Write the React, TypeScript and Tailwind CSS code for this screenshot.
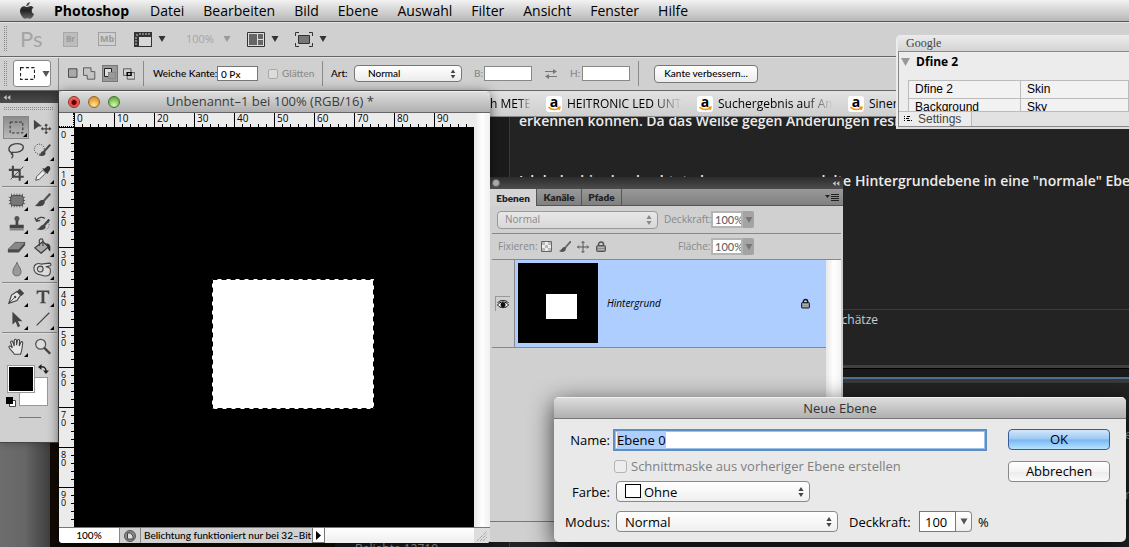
import React, { useEffect, useRef } from "react";

const ui = "font-['Open_Sans','Noto_Sans',sans-serif]";
const small = "font-[Lato,sans-serif] font-medium";

function Steppers({ className }: { className: string }) {
  return (
    <svg viewBox="0 0 6 10" className={`pointer-events-none absolute h-[10px] w-[6px] ${className}`}>
      <path d="M3 0L5.6 4H.4zM3 10L.4 6h5.2z" fill="currentColor" />
    </svg>
  );
}

function Down({ className = "text-[#333]" }: { className?: string }) {
  return (
    <svg viewBox="0 0 8 6" className={`h-[6px] w-[8px] ${className}`}>
      <path d="M.5 0h7L4 6z" fill="currentColor" />
    </svg>
  );
}

function Grip() {
  return (
    <div className="flex h-[26px] w-[4px] shrink-0 gap-px">
      <span className="w-px bg-[repeating-linear-gradient(#888_0_1px,transparent_1px_2px)]" />
      <span className="w-px bg-[repeating-linear-gradient(#888_0_1px,transparent_1px_2px)]" />
    </div>
  );
}

function Collapse({ className = "" }: { className?: string }) {
  return (
    <svg viewBox="0 0 8 6" className={`h-[5px] w-[8px] ${className}`}>
      <path d="M3.6 0v6L0 3zM8 0v6L4.4 3z" fill="#c4c4c4" />
    </svg>
  );
}

function MenuBar() {
  const items = ["Datei", "Bearbeiten", "Bild", "Ebene", "Auswahl", "Filter", "Ansicht", "Fenster", "Hilfe"];
  return (
    <nav className="flex h-[22px] shrink-0 items-center gap-[19px] border-b border-[#555] bg-gradient-to-b from-[#f2f2f2] to-[#b8b8b8] pl-[19px] text-[14px] leading-[20px] text-black">
      <svg viewBox="0 0 16 18" className="h-[17px] w-[16px]" aria-label="Apple">
        <defs>
          <linearGradient id="apple" x1="0" y1="0" x2="0" y2="1">
            <stop offset="0" stopColor="#555" />
            <stop offset="0.5" stopColor="#222" />
            <stop offset="1" stopColor="#666" />
          </linearGradient>
        </defs>
        <path
          fill="url(#apple)"
          d="M10.9 0c.1 1.3-.4 2.300-1.100 3.100C9.100 3.900 8.200 4.300 7.300 4.200c-.1-1.200.5-2.200 1.200-2.900C9.200.6 10.200.1 10.900 0zM14.900 6.100c-1.200.8-1.900 1.800-1.900 3.200 0 1.600.9 2.800 2.400 3.400-.5 1.400-1.200 2.700-2.100 3.800-.6.7-1.200 1.200-2.100 1.200-1 0-1.400-.6-2.700-.6s-1.700.6-2.700.6c-.9 0-1.600-.6-2.200-1.300C1.700 14.400.6 12 .6 9.600c0-3.400 2.200-5.200 4.300-5.200 1.300 0 2.200.8 3.300.8 1.100 0 2-.9 3.600-.9 1.200 0 2.400.6 3.100 1.800z"
        />
      </svg>
      <b className="w-[77px] font-bold">Photoshop</b>
      {items.map((t) => (
        <span key={t}>{t}</span>
      ))}
    </nav>
  );
}

function AppBar() {
  return (
    <div className="flex h-[35px] shrink-0 items-center border-b border-[#666] bg-[#d0d0d0] pl-[4px] shadow-[inset_0_1px_0_#e4e4e4]">
      <Grip />
      <span className="ml-[12px] w-[26px] font-[Lato,sans-serif] text-[22px] leading-[24px] text-[#a4a4a4]">Ps</span>
      <span className="ml-[17px] flex h-[15px] w-[15px] items-center justify-center border border-[#a8a8a8] bg-[#bdbdbd] text-[8px] font-bold text-[#999]">
        Br
      </span>
      <span className="ml-[20px] flex h-[14px] w-[18px] items-center justify-center border border-[#a0a0a0] text-[9px] font-bold text-[#999]">
        Mb
      </span>
      <svg viewBox="0 0 18 15" className="ml-[18px] h-[15px] w-[18px]">
        <path d="M0 0h18v15H0z" fill="#333" />
        <path d="M5 5h12v9H5z" fill="#d8d8d8" />
        <path d="M3 2v2M6 1v2M9 1v2M12 1v2M15 1v2M1 6h2M1 9h2M1 12h2" stroke="#ccc" />
      </svg>
      <span className="ml-[6px]"><Down /></span>
      <span className="ml-[20px] text-[11px] text-[#a4a4a4]">100%</span>
      <span className="ml-[9px]"><Down className="text-[#999]" /></span>
      <svg viewBox="0 0 18 15" className="ml-[16px] h-[15px] w-[18px]">
        <path d="M.5.5h17v14H.5z" fill="#ddd" stroke="#333" />
        <path d="M2 2h8v11H2zM11 2h5v5h-5zM11 8h5v5h-5z" fill="#666" />
      </svg>
      <span className="ml-[6px]"><Down /></span>
      <svg viewBox="0 0 18 15" className="ml-[16px] h-[15px] w-[18px]" fill="none" stroke="#333">
        <path d="M.5 4V.5H4M14 .5h3.500V4M17.500 11v3.500H14M4 14.500H.5V11" />
        <path d="M3.500 3.500h11v8h-11z" fill="#777" />
      </svg>
      <span className="ml-[6px]"><Down /></span>
    </div>
  );
}

function OptionsBar() {
  const sep = "h-[25px] w-px shrink-0 bg-[#8a8a8a]";
  return (
    <div className={`flex h-[34px] shrink-0 items-center border-b border-[#666] bg-[#d0d0d0] pl-[4px] text-[10px] shadow-[inset_0_1px_0_#e4e4e4] ${small}`}>
      <Grip />
      <button aria-label="Auswahlrechteck" className="ml-[5px] flex h-[27px] w-[38px] shrink-0 items-center rounded-[3px] border border-[#888] bg-white pl-[6px]">
        <svg viewBox="0 0 14 12" className="h-[13px] w-[15px]">
          <path d="M.5.5h13v11H.5z" fill="none" stroke="#222" strokeDasharray="3 2" />
        </svg>
        <span className="ml-[7px] flex"><Down className="w-[6px] text-[#555]" /></span>
      </button>
      <div className="mx-[7px] h-[32px] w-px shrink-0 bg-[#8a8a8a]" />
      <div className="flex w-[69px] items-center gap-[5px] pl-[2px]">
        <svg viewBox="0 0 11 11" className="h-[11px] w-[11px]">
          <path d="M.5.5h9v9h-9z" fill="#aaa" stroke="#444" />
        </svg>
        <svg viewBox="0 0 14 13" className="h-[13px] w-[14px]" fill="#c4c4c4" stroke="#555">
          <path d="M.5.5h8v4h4v8h-8v-4h-4z" />
        </svg>
        <span className="flex h-[17px] w-[17px] items-center justify-center border border-[#777] bg-[#9a9a9a]">
          <svg viewBox="0 0 12 11" className="h-[11px] w-[12px]" fill="none">
            <path d="M.5.5h7v4h-3v4h-4z" fill="#ddd" stroke="#222" />
            <path d="M4.500 4.500h7v6h-7z" stroke="#888" />
          </svg>
        </span>
        <svg viewBox="0 0 13 12" className="h-[12px] w-[13px]" fill="none" stroke="#555">
          <path d="M.5.5h8v7h-8zM4.500 4.500h8v7h-8z" />
          <path d="M4.500 4.500h4v3h-4z" fill="#eee" stroke="#000" strokeWidth="1.500" />
        </svg>
      </div>
      <div className={`ml-[8px] ${sep}`} />
      <label htmlFor="feather" className="ml-[9px] w-[64px] whitespace-nowrap">Weiche Kante:</label>
      <input id="feather" defaultValue="0 Px" className="h-[15px] w-[41px] border border-[#777] bg-white px-[3px] text-[10px] leading-[13px]" />
      <input id="alias" type="checkbox" disabled className="ml-[10px] h-[10px] w-[10px] appearance-none rounded-[2px] border border-[#aaa] bg-[#dcdcdc]" />
      <label htmlFor="alias" className="ml-[4px] w-[33px] text-[#8c8c8c]">Glätten</label>
      <div className={`ml-[7px] ${sep}`} />
      <label htmlFor="mode" className="ml-[8px] w-[23px]">Art:</label>
      <div className="relative">
        <select id="mode" className="block h-[17px] w-[108px] appearance-none rounded-[4px] border border-[#777] bg-gradient-to-b from-white to-[#ececec] pl-[13px] text-[10px] leading-[15px]">
          <option>Normal</option>
        </select>
        <Steppers className="top-[4px] right-[6px] scale-90 text-[#444]" />
      </div>
      <label htmlFor="w" className="ml-[12px] w-[8px] text-[#888]">B:</label>
      <input id="w" className="ml-[2px] h-[15px] w-[48px] border border-[#888] bg-white" />
      <svg viewBox="0 0 12 10" className="ml-[13px] h-[10px] w-[12px]" fill="#777" stroke="#777">
        <path d="M0 2.500h9M3 7.500h9" />
        <path d="M8 0l4 2.500-4 2.500zM4 5L0 7.500 4 10z" stroke="none" />
      </svg>
      <label htmlFor="h" className="ml-[13px] w-[10px] text-[#888]">H:</label>
      <input id="h" className="ml-[2px] h-[15px] w-[48px] border border-[#888] bg-white" />
      <div className={`ml-[8px] ${sep}`} />
      <button className="ml-[15px] h-[18px] w-[104px] rounded-[4px] border border-[#777] bg-gradient-to-b from-white to-[#ececec] leading-[15px] whitespace-nowrap">
        Kante verbessern...
      </button>
    </div>
  );
}

function Amazon() {
  return (
    <span className="relative flex h-[16px] w-[16px] shrink-0 justify-center rounded-[3px] bg-white">
      <b className="text-[14px] leading-[11px] text-black">a</b>
      <svg viewBox="0 0 14 5" className="absolute bottom-px h-[5px] w-[13px]" fill="none" stroke="#f39200" strokeWidth="1.500">
        <path d="M.5 1Q6 5.500 12 2M10 1h3l-1 3" />
      </svg>
    </span>
  );
}

function Bookmark({ text, width, fade = true }: { text: string; width: string; fade?: boolean }) {
  return (
    <span className={`flex items-center gap-[5px] ${width}`}>
      <Amazon />
      <span className={`overflow-hidden whitespace-nowrap ${fade ? "[mask-image:linear-gradient(90deg,#000_75%,transparent)]" : ""}`}>{text}</span>
    </span>
  );
}

function Browser() {
  return (
    <div className="absolute inset-0 flex flex-col overflow-hidden bg-[#232323]">
      <div className="flex h-[26px] shrink-0 items-center gap-[15px] border-b border-[#888] bg-gradient-to-b from-[#e2e2e2] to-[#cfcfcf] pl-[490px] text-[12px] text-black">
        <span className="w-[41px] overflow-hidden whitespace-nowrap [mask-image:linear-gradient(90deg,#000_70%,transparent)]">h METEO</span>
        <Bookmark text="HEITRONIC LED UNTER" width="w-[136px]" />
        <Bookmark text="Suchergebnis auf Amaz" width="w-[136px]" />
        <Bookmark text="Sinergy" width="w-[90px]" fade={false} />
      </div>
      <div className="flex grow">
        <div className="flex w-[510px] shrink-0 flex-col justify-end border-r border-[#3a3a3a] bg-[#1b1b1b]">
          <div className="flex h-[106px]">
            <div className="w-[50px] bg-gradient-to-r from-[#6d6d6d] via-[#666] to-[#3f3f3f]" />
            <div className="w-[285px] bg-[#120a04]" />
            <div className="flex grow items-end bg-[#1b1b1b] pl-[20px] text-[12px] text-[#aaa]">
              <span className="h-[4px] overflow-hidden leading-[12px]">Beliebte 12719</span>
            </div>
          </div>
        </div>
        <div className="flex min-w-0 grow flex-col overflow-hidden text-[14px] leading-[20px] font-semibold whitespace-nowrap text-[#ececec]">
          <p className="-mt-[6px] h-[60px] pl-[9px]">erkennen können. Da das Weiße gegen Änderungen resistent ist</p>
          <p className="flex h-[138px] pl-[9px]">
            <span className="flex w-[336px] shrink-0 justify-between pr-[4px]">
              <span>Ich habe hier beobachtet, dass</span>
              <span>umgewandelte</span>
            </span>
            <span>Hintergrundebene in eine "normale" Ebene</span>
          </p>
          <div className="flex h-[56px] items-start border-t border-[#3c3c3c] pl-[325px] text-[12px] font-normal text-[#ccc]">Schätze</div>
          <div className="h-[3px] bg-[#404040]" />
          <div className="h-[9px] border-t border-black bg-[#1a1a1a]" />
          <div className="h-[2px] bg-[#4c7194]" />
          <div className="h-[4px] bg-[#3a3a3a]" />
          <div className="flex flex-col items-end pt-[42px] text-[12px] font-normal text-[#aaa]">
            <span className="w-[4px]">e</span>
            <span className="mt-[40px] w-[4px]">r</span>
          </div>
        </div>
      </div>
    </div>
  );
}

type Tool = { name: string; art: React.ReactNode; active?: boolean; plain?: boolean };

const g1: Tool[] = [
  { name: "Auswahlrechteck", active: true, art: <path d="M3.500 4.500h14v12h-14z" fill="none" stroke="#222" strokeDasharray="3 2" /> },
  { name: "Verschieben", plain: true, art: (<><path d="M1 2l9 7-4 .5L1 13z" fill="#444" /><path d="M14.500 7v10M9.500 12h10M13 8.500L14.500 7 16 8.500M13 15.500l1.500 1.500 1.500-1.500M11 10.500L9.500 12l1.500 1.500M18 10.500l1.500 1.500-1.500 1.500" fill="none" stroke="#444" strokeWidth="1.200" /></>) },
  { name: "Lasso", art: <path d="M5 13C1 11 1 6 6 4s12-1 12 3-6 6-11 5.500c-3-.5-3 3-.5 2.500M5 13c2 2 2 4 0 6" fill="none" stroke="#444" strokeWidth="1.500" /> },
  { name: "Schnellauswahl", art: (<><circle cx="7" cy="9" r="5.500" fill="none" stroke="#222" strokeDasharray="1 1.500" /><path d="M19 4l-7 8" stroke="#444" strokeWidth="2.200" /><path d="M12 11c-4 0-3 4-6 5 4 1 8 1 8-3z" fill="#444" /></>) },
  { name: "Freistellen", art: (<><path d="M6.500 2v12h12M2 6.500h12v12" fill="none" stroke="#444" strokeWidth="2.300" /><path d="M4 17L18 3" stroke="#444" /></>) },
  { name: "Pipette", art: (<><path d="M3 18l1-4 7-7 3 3-7 7z" fill="#eee" stroke="#444" /><path d="M10 5l6 6 1-2 2-3c1-3-2-5-4-3l-2 2z" fill="#333" /></>) },
];
const g2: Tool[] = [
  { name: "Reparatur", art: (<><path d="M5 3v15M8 3v15M11 3v15M14 3v15M17 3v15M2 7h18M2 10.500h18M2 14h18" stroke="#555" /><rect x="4" y="5" width="14" height="11" rx="3" fill="#777" stroke="#444" /></>) },
  { name: "Pinsel", art: (<><path d="M19 3l-8 9" stroke="#555" strokeWidth="2.500" /><path d="M11 10c-5-1-5 5-9 6 5 2 11 1 11-4z" fill="#444" /></>) },
  { name: "Stempel", art: (<><circle cx="11" cy="5" r="2.800" fill="#555" /><path d="M9.500 7h3v5h6v4H3v-4h6.500z" fill="#444" /><path d="M3 17.500h15.500" stroke="#555" /></>) },
  { name: "Protokollpinsel", art: (<><path d="M18 6l-7 8" stroke="#444" strokeWidth="2.500" /><path d="M12 12c-4 0-4 4-8 5 4 1 10 1 10-3z" fill="#444" /><path d="M4 7c2-4 7-4 9-2M2 4l2 4 4-1" fill="none" stroke="#444" strokeWidth="1.500" /><path d="M17 9c2 4 0 7-3 9" fill="none" stroke="#444" strokeDasharray="1 1.500" /></>) },
  { name: "Radiergummi", art: (<><path d="M1 14l8-8h11l-7 8z" fill="#888" stroke="#555" /><path d="M1 14h12v3H1zM13 14l7-8v3l-7 8z" fill="#4a4a4a" /></>) },
  { name: "Füllwerkzeug", art: (<><path d="M2 12l9-7 6 6-8 7z" fill="#aaa" stroke="#333" strokeWidth="1.300" /><path d="M7 10V4c0-2.500 4-2.500 4 0v6" fill="none" stroke="#444" strokeWidth="1.300" /><path d="M14 7c5 0 6 3 5 9-2-1-3-4-3-6z" fill="#333" /></>) },
  { name: "Weichzeichner", art: <path d="M11 2.500c1 4 4.500 6 4.500 10.500a4.500 4.500 0 01-9 0c0-4.500 3.500-6.500 4.500-10.500z" fill="#999" stroke="#666" /> },
  { name: "Abwedler", art: (<><path d="M1 9c0-5 5-6 8-4.500l9-1c2.500 0 2.500 3 0 3.200l-4 .8c5 0 6 3 5 7-1 3-4 3.500-7 3l-3-1C4 16 1 13 1 9z" fill="#ddd" stroke="#444" strokeWidth="1.200" /><circle cx="8" cy="10" r="3.200" fill="#d0d0d0" stroke="#444" strokeWidth="1.200" /></>) },
];
const g3: Tool[] = [
  { name: "Zeichenstift", art: (<><path d="M2 18l3-9 6-4 4 4-4 6z" fill="#e4e4e4" stroke="#444" strokeWidth="1.200" /><path d="M11 5l3-3 5 5-3 3z" fill="#444" /><path d="M2 18l6-6" stroke="#444" /><circle cx="9" cy="11" r="1.300" fill="#444" /></>) },
  { name: "Text", art: <path d="M4 4h14v4h-1c-.3-2-1-2.500-4.500-2.500V16c0 1 .5 1 2 1.200v.8H7.500v-.8c1.500-.2 2-.2 2-1.200V5.500C6 5.500 5.300 6 5 8H4z" fill="#444" /> },
  { name: "Pfadauswahl", art: <path d="M6 2v14l3.500-3 2.500 6 2.500-1.200-2.500-5.500h5z" fill="#444" /> },
  { name: "Linie", art: <path d="M4 17L18 3" stroke="#444" strokeWidth="1.300" /> },
];
const g4: Tool[] = [
  { name: "Hand", art: <path d="M8 19c-1-3-5-5-6-8 0-1.500 2-1.500 3 0l1 1L4 6c0-2 2-2 2.500-.5L8 10V4c0-2 2.500-2 2.500 0v5l1-5c.3-1.800 2.500-1.500 2.400.3L13.500 10l1.700-4c.8-1.500 2.500-.8 2.200.8C16.500 11 17 14 15 19z" fill="#e8e8e8" stroke="#444" strokeWidth="1.200" /> },
  { name: "Zoom", plain: true, art: (<><circle cx="8.500" cy="8" r="5.500" fill="#dcdcdc" stroke="#555" strokeWidth="1.400" /><path d="M12.500 12l6.500 6.500" stroke="#444" strokeWidth="2.600" /></>) },
];

function ToolGroup({ tools }: { tools: Tool[] }) {
  return (
    <div className="grid grid-cols-[26px_26px] pl-[3px]">
      {tools.map((t) => (
        <button key={t.name} aria-label={t.name} className={`relative flex h-[23px] w-[26px] items-center justify-center ${t.active ? "border border-[#888] bg-gradient-to-b from-[#8c8c8c] to-[#bbb]" : ""}`}>
          <svg viewBox="0 0 21 21" className="h-[19px] w-[19px] shrink-0">{t.art}</svg>
          {!t.plain && <span className="absolute right-px bottom-px h-[4px] w-[4px] bg-black [clip-path:polygon(100%_0,100%_100%,0_100%)]" />}
        </button>
      ))}
    </div>
  );
}

function Tools() {
  const rule = <div className="my-px ml-[2px] h-[2px] w-[55px] border-t border-[#888] bg-[#ddd]" />;
  const dots = "h-px bg-[repeating-linear-gradient(90deg,#888_0_1px,transparent_1px_2px)]";
  return (
    <aside className="absolute top-0 left-0 w-[59px] border-r border-b border-[#444] bg-[#d0d0d0] pb-[24px] shadow-md">
      <div className="flex h-[12px] items-center bg-gradient-to-b from-[#333] to-[#4c4c4c] pl-[3px]"><Collapse /></div>
      <div className="mt-[4px] mb-[5px] ml-[4px] flex h-[4px] w-[50px] flex-col gap-px">
        <span className={dots} />
        <span className={dots} />
      </div>
      <ToolGroup tools={g1} />
      {rule}
      <ToolGroup tools={g2} />
      {rule}
      <ToolGroup tools={g3} />
      {rule}
      <ToolGroup tools={g4} />
      <div className="relative mt-[7px] ml-[7px] h-[43px] w-[42px]">
        <div className="absolute top-[12px] left-[12px] h-[29px] w-[29px] border border-[#999] bg-white" />
        <div className="absolute top-0 left-0 h-[28px] w-[28px] border border-[#999] bg-black shadow-[inset_0_0_0_1px_#fff]" />
        <svg viewBox="0 0 11 10" className="absolute -top-px left-[31px] h-[10px] w-[11px]" fill="none" stroke="#222" strokeWidth="1.500">
          <path d="M2 3c4-1 6 1 6 4" />
          <path d="M3.500 0v6L0 3zM5 6.500h6L8 10z" fill="#222" stroke="none" />
        </svg>
        <svg viewBox="0 0 10 10" className="absolute top-[32px] -left-px h-[10px] w-[10px]">
          <path d="M3.500 3.500h6v6h-6z" fill="#fff" stroke="#444" />
          <path d="M0 0h7v7H0z" fill="#000" />
        </svg>
      </div>
      <div className="mt-[9px] ml-[19px] h-px w-[22px] bg-[#777]" />
    </aside>
  );
}

const marks = ["0", "10", "20", "30", "40", "50", "60", "70", "80", "90"];

function DocumentWindow() {
  const lights = [
    "bg-[radial-gradient(circle_at_50%_55%,#600_0_2px,#e8453f_3px,#f9a09a)] border-[#8a2a26]",
    "bg-[radial-gradient(circle_at_50%_80%,#ffe79a,#e8a33c_60%,#c98a3a)] border-[#8f6428]",
    "bg-[radial-gradient(circle_at_50%_80%,#d4f7b0,#7cc254_60%,#5a9a46)] border-[#43702f]",
  ];
  return (
    <section className="absolute top-0 left-[59px] flex w-[431px] flex-col overflow-hidden rounded-t-[5px] rounded-b-[4px] bg-[#ebebeb] shadow-[0_2px_12px_rgba(0,0,0,0.6)]">
      <header className="flex h-[22px] items-center border-t border-b border-t-[#eee] border-b-[#666] bg-gradient-to-b from-[#dedede] to-[#b0b0b0] pl-[9px]">
        <div className="flex w-[98px] gap-[8px]">
          {lights.map((c) => (
            <span key={c} className={`h-[12px] w-[12px] rounded-full border ${c}`} />
          ))}
        </div>
        <h1 className="text-[13px] whitespace-nowrap text-[#3c3c3c]">Unbenannt–1 bei 100% (RGB/16) *</h1>
      </header>
      <div className="flex">
        <div className="w-[15px] shrink-0 overflow-hidden">
          <div className="h-[14px] border-r border-b border-dotted border-black" />
          <div className="flex h-[400px] flex-col overflow-hidden">
            {marks.map((m) => (
              <div key={m} className="flex h-[40px] shrink-0 justify-between border-t border-black">
                <span className="w-[8px] pt-[3px] pl-[2px] text-[9px] leading-[8px] break-all">{m}</span>
                <span className="h-[39px] w-[3px] bg-[repeating-linear-gradient(180deg,transparent_0_7px,#000_7px_8px)]" />
              </div>
            ))}
          </div>
        </div>
        <div className="w-[400px]">
          <div className="flex h-[14px] overflow-hidden">
            {marks.map((m) => (
              <div key={m} className="flex h-[14px] w-[40px] shrink-0 flex-col justify-between border-l border-black">
                <span className="h-[11px] pl-[2px] text-[10px] leading-[11px]">{m}</span>
                <span className="h-[3px] bg-[repeating-linear-gradient(90deg,transparent_0_7px,#000_7px_8px)]" />
              </div>
            ))}
          </div>
          <div className="h-[400px] bg-black pt-[152px] pl-[138px]">
            <svg viewBox="0 0 162 130" className="block h-[130px] w-[162px]">
              <path d="M0 0h162v130H0z" fill="#fff" />
              <path d="M.5.5h161v129H.5z" fill="none" stroke="#000" strokeDasharray="5 4" />
            </svg>
          </div>
        </div>
        <div className="w-[16px] bg-gradient-to-r from-[#e8e8e8] via-white to-[#f0f0f0]" />
      </div>
      <footer className={`flex h-[16px] items-stretch border-t border-[#777] bg-gradient-to-b from-white to-[#eee] text-[10px] leading-[15px] ${small}`}>
        <input aria-label="Zoomstufe" defaultValue="100%" className="w-[61px] border-r border-[#888] bg-white text-center" />
        <span className="flex w-[21px] items-center justify-center border-r border-[#888] bg-[#d0d0d0]">
          <svg viewBox="0 0 12 12" className="h-[12px] w-[12px]">
            <circle cx="6" cy="6" r="5.500" fill="#888" stroke="#555" />
            <path d="M3.500 3h3l2.500 3v3H3.500z" fill="#ddd" stroke="#444" />
          </svg>
        </span>
        <span className="w-[171px] bg-[#d0d0d0] pl-[3px] whitespace-nowrap">Belichtung funktioniert nur bei 32–Bit</span>
        <button aria-label="Statusmenü" className="flex w-[13px] items-center justify-center border border-t-0 border-[#777] bg-white">
          <svg viewBox="0 0 5 9" className="h-[9px] w-[5px]"><path d="M0 0l5 4.500L0 9z" /></svg>
        </button>
        <span className="grow" />
        <span className="w-[16px] bg-[#ddd] p-[2px]">
          <svg viewBox="0 0 11 11" className="h-[11px] w-[11px]"><path d="M1 11L11 1M4 11l7-7M7 11l4-4" stroke="#888" strokeDasharray="1 1" /></svg>
        </span>
      </footer>
    </section>
  );
}

function Lock({ className }: { className: string }) {
  return (
    <svg viewBox="0 0 10 11" className={className}>
      <path d="M2.500 5V3.500a2.500 2.500 0 015 0V5" fill="none" stroke="currentColor" strokeWidth="1.500" />
      <rect x=".5" y="4.500" width="9" height="6" rx="1" fill="#888" stroke="currentColor" />
      <path d="M2 6.500h6M2 8.500h6" stroke="#ccc" strokeWidth=".7" />
    </svg>
  );
}

function Percent({ id }: { id: string }) {
  return (
    <span className="flex h-[17px]">
      <input id={id} defaultValue="100%" className={`w-[32px] border-2 border-[#b4b4b4] bg-white pl-[2px] text-[11px] leading-[13px] text-[#666] ${small}`} />
      <button aria-label="Wert wählen" className="flex w-[11px] items-center justify-center rounded-r-[2px] bg-[#a4a4a4]">
        <Down className="h-[4px] w-[5px] text-[#777]" />
      </button>
    </span>
  );
}

function LayersPanel() {
  return (
    <section className="absolute top-[86px] left-[490px] flex h-[365px] w-[353px] flex-col bg-[#d0d0d0]">
      <header className="flex h-[12px] shrink-0 items-center justify-between bg-gradient-to-b from-[#2c2c2c] to-[#4d4d4d] pr-[3px] pl-[2px]">
        <span className="h-[8px] w-[8px] rounded-full border border-[#666] bg-[#aaa]" />
        <Collapse />
      </header>
      <div className="flex h-[17px] shrink-0 border-b border-[#555] bg-gradient-to-b from-[#999] to-[#808080] font-[Lato,sans-serif] text-[10px] leading-[16px] font-extrabold text-[#222]">
        <button className="-mb-px w-[47px] border-r border-[#555] bg-[#d4d4d4]">Ebenen</button>
        <button className="w-[45px] border-r border-[#555]">Kanäle</button>
        <button className="w-[40px] border-r border-[#555]">Pfade</button>
        <svg viewBox="0 0 14 9" className="mt-[4px] mr-[4px] ml-auto h-[9px] w-[14px]">
          <path d="M0 2h5L2.500 5z" fill="#222" />
          <path d="M6 1.500h8M6 3.500h8M6 5.500h8M6 7.500h8" stroke="#222" />
        </svg>
      </div>
      <div className="mx-[2px] flex h-[28px] shrink-0 items-center border-b border-[#888] pl-[5px] text-[10px] text-[#888]">
        <div className="relative">
          <select aria-label="Füllmethode" className="block h-[18px] w-[161px] appearance-none rounded-[4px] border border-[#999] bg-gradient-to-b from-[#e8e8e8] to-[#d8d8d8] pl-[7px] text-[10px] leading-[15px]">
            <option>Normal</option>
          </select>
          <Steppers className="top-[4px] right-[6px]" />
        </div>
        <label htmlFor="opacity" className="ml-[6px] w-[47px]">Deckkraft:</label>
        <Percent id="opacity" />
      </div>
      <div className="mx-[2px] flex h-[26px] shrink-0 items-center border-b border-[#888] pl-[6px] text-[10px] text-[#888]">
        <span className="w-[43px]">Fixieren:</span>
        <svg viewBox="0 0 11 11" className="h-[11px] w-[11px]">
          <path d="M.5.5h10v10H.5z" fill="#eee" stroke="#666" />
          <path d="M1 1h3v3H1zM7 1h3v3H7zM4 4h3v3H4zM1 7h3v3H1zM7 7h3v3H7z" fill="#bbb" />
        </svg>
        <svg viewBox="0 0 12 12" className="ml-[7px] h-[12px] w-[12px]">
          <path d="M12 0L6 7" stroke="#666" strokeWidth="1.800" />
          <path d="M6 6C3 5.500 3 9 0 10c3 2 7 1 7-2.500z" fill="#555" />
        </svg>
        <svg viewBox="0 0 12 12" className="ml-[6px] h-[12px] w-[12px]" fill="none" stroke="#555">
          <path d="M6 .5v11M.5 6h11M4.500 2L6 .5 7.500 2M4.500 10L6 11.500 7.500 10M2 4.500L.5 6 2 7.500M10 4.500L11.500 6 10 7.500" />
        </svg>
        <Lock className="ml-[7px] h-[11px] w-[10px] text-[#555]" />
        <label htmlFor="fill" className="ml-auto w-[33px]">Fläche:</label>
        <span className="mr-[87px]"><Percent id="fill" /></span>
      </div>
      <div className="ml-[2px] flex grow">
        <div className="flex grow flex-col">
          <div className="flex h-[88px] border-b border-[#888]">
            <div className="flex w-[23px] items-center border-r border-[#888] pl-[3px]">
              <button aria-label="Sichtbarkeit" className="flex h-[15px] w-[15px] items-center justify-center border-t border-l border-[#999]">
                <svg viewBox="0 0 12 9" className="h-[9px] w-[12px]">
                  <path d="M.5 5C3 1 9 1 11.500 5 9 8.500 3 8.500.5 5z" fill="#fff" stroke="#111" />
                  <circle cx="6" cy="4.800" r="2.500" fill="#111" />
                  <path d="M.5 3C3-.5 9-.5 11.500 3" fill="none" stroke="#222" />
                </svg>
              </button>
            </div>
            <div className="flex grow items-center bg-[#aeceff] pr-[16px] pb-px pl-[3px]">
              <div className="h-[80px] w-[80px] bg-black pt-[31px] pl-[28px]">
                <div className="h-[25px] w-[31px] bg-white" />
              </div>
              <i className="ml-[9px] text-[10px] text-black">Hintergrund</i>
              <Lock className="ml-auto h-[11px] w-[9px] text-[#111]" />
            </div>
          </div>
        </div>
        <div className="mr-[2px] w-[15px] bg-gradient-to-r from-[#e8e8e8] via-white to-[#f4f4f4]" />
      </div>
      <div className="h-[21px] shrink-0 border-t border-[#777]" />
    </section>
  );
}

function GooglePanel() {
  return (
    <section className="absolute top-[35px] right-0 flex h-[94px] w-[233px] flex-col overflow-hidden rounded-tl-[5px] border-b-2 border-b-[#ddd] bg-[#ececec] pl-[2px] font-['Liberation_Sans',Arial,sans-serif] text-[12px] text-black">
      <header className="h-[16px] shrink-0 bg-gradient-to-b from-[#ececec] to-[#d4d4d4] pl-[8px] font-['Liberation_Serif',serif] text-[12px] leading-[17px] text-[#444]">
        Google
      </header>
      <div className="flex grow flex-col border-t border-b border-l border-[#888]">
        <div className="flex h-[28px] shrink-0 items-start gap-[6px] pt-px pl-[2px]">
          <svg viewBox="0 0 9 8" className="mt-[5px] h-[8px] w-[9px]"><path d="M0 0h9L4.500 8z" fill="#999" /></svg>
          <b className={`text-[12px] leading-[17px] ${ui}`}>Dfine 2</b>
        </div>
        <div className="ml-[9px] h-[31px] overflow-hidden">
          <table className="w-full table-fixed border-collapse leading-[17px]">
            <tbody>
              <tr>
                <td className="h-[18px] w-[112px] border border-[#bbb] bg-[#f2f2f2] pl-[6px]">Dfine 2</td>
                <td className="border border-[#bbb] bg-[#f2f2f2] pl-[6px]">Skin</td>
              </tr>
              <tr>
                <td className="h-[18px] border border-[#bbb] bg-[#f2f2f2] pl-[6px]">Background</td>
                <td className="border border-[#bbb] bg-[#f2f2f2] pl-[6px]">Sky</td>
              </tr>
            </tbody>
          </table>
        </div>
        <div className="flex grow border-t border-[#bbb] bg-[#e2e2e2] text-[#444]">
          <button className="flex w-[73px] items-center gap-[6px] border-r border-[#bbb] bg-[#ececec] pl-[5px] leading-[13px]">
            <svg viewBox="0 0 8 6" className="h-[6px] w-[8px] shrink-0"><path d="M0 .5h1M3 .5h3M0 2.500h1M2 2.500h3M0 4.500h1M3 4.500h3M7 4.500h1" stroke="#000" /></svg>
            Settings
          </button>
        </div>
      </div>
    </section>
  );
}

function NewLayerDialog() {
  const name = useRef<HTMLInputElement>(null);
  useEffect(() => {
    name.current?.focus();
    name.current?.select();
  }, []);
  const select = "block h-[21px] appearance-none rounded-[4px] border border-[#888] bg-gradient-to-b from-white to-[#efefef] text-[13px] leading-[18px]";
  const label = "w-[56px] shrink-0 text-right";
  return (
    <form onSubmit={(e) => e.preventDefault()} className="absolute top-[306px] left-[554px] w-[572px] overflow-hidden rounded-[5px] bg-[#e9e9e9] text-[13px] leading-[18px] text-black shadow-[0_6px_24px_rgba(0,0,0,0.75)]">
      <header className="h-[22px] border-t border-b border-t-[#f0f0f0] border-b-[#777] bg-gradient-to-b from-[#dcdcdc] to-[#b0b0b0] text-center leading-[20px] text-[#333]">Neue Ebene</header>
      <div className="flex justify-between pt-[10px] pr-[16px] pb-[10px]">
        <div>
          <div className="flex h-[22px] items-center gap-[3px]">
            <label htmlFor="name" className={label}>Name:</label>
            <input ref={name} id="name" defaultValue="Ebene 0" className="h-[22px] w-[374px] border-2 border-[#5d8fc4] bg-white px-[2px] shadow-[inset_0_0_0_1px_#9fc3ea] outline-none selection:bg-[#aeceff] selection:text-black" />
          </div>
          <div className="mt-[6px] flex h-[18px] items-center gap-[4px] pl-[60px] text-[#808080]">
            <input id="clip" type="checkbox" disabled className="h-[13px] w-[13px] appearance-none rounded-[3px] border border-[#b4b4b4] bg-[#ededed]" />
            <label htmlFor="clip">Schnittmaske aus vorheriger Ebene erstellen</label>
          </div>
          <div className="mt-[6px] flex h-[21px] items-center gap-[6px]">
            <label htmlFor="color" className={label}>Farbe:</label>
            <div className="relative">
              <select id="color" className={`w-[194px] pl-[27px] ${select}`}><option>Ohne</option></select>
              <span className="pointer-events-none absolute top-[3px] left-[9px] h-[14px] w-[16px] border border-black bg-white" />
              <Steppers className="top-[6px] right-[6px] text-[#444]" />
            </div>
          </div>
          <div className="mt-[9px] flex h-[21px] items-center gap-[6px]">
            <label htmlFor="blend" className={label}>Modus:</label>
            <div className="relative">
              <select id="blend" className={`w-[222px] pl-[8px] ${select}`}><option>Normal</option></select>
              <Steppers className="top-[6px] right-[6px] text-[#444]" />
            </div>
            <label htmlFor="alpha" className="ml-[5px] w-[64px]">Deckkraft:</label>
            <span className="flex h-[21px]">
              <input id="alpha" defaultValue="100" className="w-[37px] border border-[#777] bg-white pl-[5px]" />
              <button type="button" aria-label="Deckkraft wählen" className="flex w-[16px] items-center justify-center rounded-r-[4px] border border-l-0 border-[#888] bg-gradient-to-b from-white to-[#eee]"><Down className="h-[7px] text-[#555]" /></button>
            </span>
            <span>%</span>
          </div>
        </div>
        <div className="flex w-[102px] flex-col gap-[11px]">
          <button type="submit" className="h-[21px] rounded-[4px] border border-[#3d5a94] bg-[linear-gradient(#d3e6fa,#9cc8f4_48%,#79b6f2_52%,#b6e4ff)] leading-[17px]">OK</button>
          <button type="button" className="h-[21px] rounded-[4px] border border-[#888] bg-[linear-gradient(#fff,#f4f4f4_50%,#ebebeb_52%,#fafafa)] leading-[17px]">Abbrechen</button>
        </div>
      </div>
    </form>
  );
}

export default function App() {
  return (
    <div className={`relative flex h-screen w-full flex-col overflow-hidden bg-[#1b1b1b] text-black ${ui}`}>
      <MenuBar />
      <AppBar />
      <OptionsBar />
      <main className="relative grow">
        <Browser />
        <Tools />
        <DocumentWindow />
        <LayersPanel />
        <NewLayerDialog />
      </main>
      <GooglePanel />
    </div>
  );
}
